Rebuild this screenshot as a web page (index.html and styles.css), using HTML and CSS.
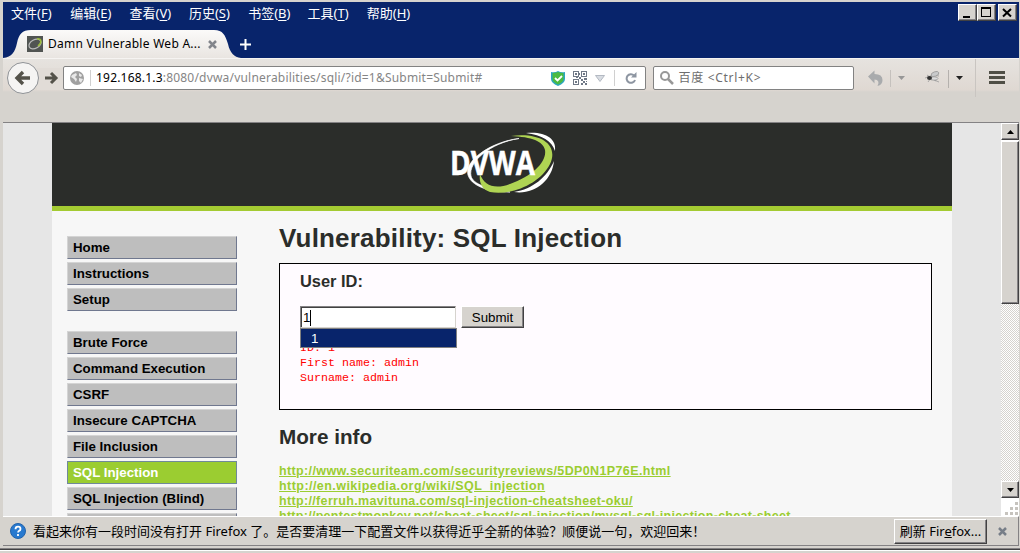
FILE: index.html
```html
<!DOCTYPE html>
<html lang="zh-CN">
<head>
<meta charset="utf-8">
<title>Damn Vulnerable Web App</title>
<link rel="stylesheet" href="styles.css">
</head>
<body>
<div class="window">
  <header class="titlebar">
    <div class="menu-row">
      <nav class="menubar">
        <span>文件(<u>F</u>)</span><span>编辑(<u>E</u>)</span><span>查看(<u>V</u>)</span><span>历史(<u>S</u>)</span><span>书签(<u>B</u>)</span><span>工具(<u>T</u>)</span><span>帮助(<u>H</u>)</span>
      </nav>
      <div class="controls">
        <span class="bevel control"><svg width="16" height="14"><path d="M4 11h7v2H4z"/></svg></span>
        <span class="bevel control"><svg width="16" height="14"><path d="M3 2h10v10H3zM4 4v7h8V4z" fill-rule="evenodd"/></svg></span>
        <span class="bevel control close"><svg width="16" height="14"><path d="M4 4l8 7.500M12 4l-8 7.500" stroke="#000" stroke-width="2"/></svg></span>
      </div>
    </div>
    <div class="tab-row">
      <div class="tab">
        <svg class="tab-shape" width="238" height="28" viewBox="0 0 238 28">
          <defs><linearGradient id="tabfill" x2="0" y2="1"><stop offset="0" stop-color="#fbfaf9"/><stop offset="1" stop-color="#e9e5e1"/></linearGradient></defs>
          <path d="M0 28C9 27 12 22 14 13C16 4 19 0 28 0H211C220 0 222 5 225 14C227 23 231 27 238 28Z" fill="url(#tabfill)"/>
        </svg>
        <div class="tab-label">
          <svg width="16" height="16"><path fill="#515452" d="M0 0h16v16H0z"/><ellipse cx="8" cy="8" rx="6.500" ry="4.200" transform="rotate(-28 8 8)" fill="none" stroke="#bbb" stroke-width="1.300"/><path d="M10 3c5-1 5 4 1 7" fill="none" stroke="#9bbb3a" stroke-width="1.500"/></svg>
          <span class="tab-title">Damn Vulnerable Web A...</span>
          <svg class="tab-close" width="9" height="9"><path d="M1 1l7 7M8 1l-7 7" stroke="#82858b" stroke-width="2.500"/></svg>
        </div>
      </div>
      <svg class="new-tab" width="11" height="11"><path d="M5.500 0v11M0 5.500h11" stroke="#fff" stroke-width="2"/></svg>
    </div>
  </header>

  <div class="toolbar">
    <svg class="back" width="64" height="34" viewBox="0 0 64 34">
      <path d="M31 7h28v22H31z" fill="#e1dcd7"/>
      <circle cx="17" cy="17" r="15.500" fill="#f5f4f3" stroke="#8f9296"/>
      <path d="M24 17H12M17 11l-6 6 6 6" fill="none" stroke="#54524a" stroke-width="3.400"/>
      <path d="M39 17h10M45 12l5 5-5 5" fill="none" stroke="#54524a" stroke-width="3"/>
    </svg>
    <div class="urlbar">
      <svg class="globe" width="14" height="14"><circle cx="7" cy="7" r="7" fill="#a0a0a0"/><path d="M2 4l4-2 1 2-2 2 2 2-1 3-2-3-3-2zM9 2l3 2-1 2-2-1zM9 7l4 1-2 4-2-2z" fill="#e8e8e8"/></svg>
      <span class="sep"></span>
      <span class="url"><b>192.168.1.3</b>:8080/dvwa/vulnerabilities/sqli/?id=1&amp;Submit=Submit#</span>
      <svg class="shield" width="14" height="15"><path d="M0 1q4 1 7-1q3 2 7 1v7q0 4-7 7q-7-3-7-7z" fill="#2ba6c2"/><path d="M1.500 2q3 0 5.500-1q2.500 1 5.500 1v6q0 3-5.500 5.500q-5.500-2.500-5.500-5.500z" fill="#4bbb42"/><path d="M4 7l2.500 2.500L11 5" fill="none" stroke="#fff" stroke-width="1.800"/></svg>
      <svg class="qr" width="14" height="14" fill="#6f7886"><path fill-rule="evenodd" d="M0 0h6v6H0zM1 1v4h4V1zM8 0h6v6H8zM9 1v4h4V1zM0 8h6v6H0zM1 9v4h4V9z"/><path d="M2 2h2v2H2zM10 2h2v2h-2zM2 10h2v2H2zM6 6h2v2H6zM8 8h2v2H8zM11 7h3v2h-3zM10 10h2v2h-2zM12 12h2v2h-2zM8 12h2v2H8zM6 2h1v2H6zM13 10h1v1h-1zM3 6h2v1H3z"/></svg>
      <svg class="drop" width="10" height="7"><path d="M.5.5h9L5 6.500z" fill="#d8dce2" stroke="#b3b9c2"/></svg>
      <span class="sep"></span>
      <svg class="reload" width="12" height="12"><path d="M9 3.500A4.300 4.300 0 1 0 10 8" fill="none" stroke="#8d95a1" stroke-width="2"/><path d="M11.500 0v5.500H6z" fill="#8d95a1"/></svg>
    </div>
    <div class="search">
      <svg width="14" height="14"><circle cx="5" cy="5" r="4" fill="none" stroke="#989898" stroke-width="2"/><path d="M8 8l5 5" stroke="#989898" stroke-width="2.500"/></svg>
      <span>百度 &lt;Ctrl+K&gt;</span>
    </div>
    <div class="tools">
      <svg width="156" height="38" viewBox="0 0 156 38">
        <path d="M5 17.500l6.500-6v3.500q8 0 8 6q0 5-5 6q3-6-3-6.500v4z" fill="#a9abad"/>
        <path d="M27.500 11v17" stroke="#c5c1bd"/><path d="M35 17h7l-3.500 4z" fill="#979797"/>
        <g stroke="#999" stroke-width=".8" fill="none"><path d="M62 19l8-3 6 1M64 16l9 6M65 23l5-7 4-3M71 21l5 2"/><ellipse cx="72" cy="15" rx="4" ry="2.200" fill="#c9cacb" transform="rotate(-20 72 15)"/><ellipse cx="71" cy="19.500" rx="4" ry="1.700" fill="#ddd"/></g><ellipse cx="66.500" cy="19" rx="2.500" ry="2" fill="#333"/>
        <path d="M85.500 11v18" stroke="#b5b1ad"/><path d="M93 17h7l-3.500 4z" fill="#222"/>
        <path d="M112.500 0v38" stroke="#c9c5c1"/>
        <path d="M126 12h16v3h-16zM126 17h16v3h-16zM126 22h16v3h-16z" fill="#504f46"/>
      </svg>
    </div>
  </div>

  <div class="viewport">
    <div class="page">
      <div class="container">
        <div class="banner">
          <svg width="112" height="66" viewBox="0 0 112 66">
            <path d="M71 7.500C42 12 20 31 23 45C25 53 39 58 62 61C38 61 23 54 20 44C16 30 42 11 71 7.500Z" fill="#fff" stroke="#fff" stroke-width=".7"/>
            <path d="M78 2C96 0 109 7 107 20C104 10 94 4 78 2ZM106 30C104 50 86 64 66 61C85 58 99 46 106 30Z" fill="#fff"/>
            <path d="M63 5C93 1 111 14 102 33C92 53 63 65 42 61C32 58 31 48 32 43C36 54 46 59 62 53C84 45 99 31 97 19C95 10 84 6 63 5Z" fill="#afd453"/>
            <text x="2" y="44" class="logo-text" textLength="85" lengthAdjust="spacingAndGlyphs">DVWA</text>
          </svg>
        </div>
        <div class="body">
          <ul class="side">
            <li>Home</li><li>Instructions</li><li>Setup</li>
            <li class="group">Brute Force</li><li>Command Execution</li><li>CSRF</li><li>Insecure CAPTCHA</li><li>File Inclusion</li><li class="selected">SQL Injection</li><li>SQL Injection (Blind)</li><li></li>
          </ul>
          <main class="main">
            <h1>Vulnerability: SQL Injection</h1>
            <section class="panel">
              <h3>User ID:</h3>
              <div class="form">
                <div class="field">1<i class="caret"></i><div class="suggest">1</div></div>
                <span class="submit">Submit</span>
              </div>
              <pre class="result">ID: 1
First name: admin
Surname: admin</pre>
            </section>
            <h2>More info</h2>
            <div class="links">
              <a class="l1">http://www.securiteam.com/securityreviews/5DP0N1P76E.html</a>
              <a class="l2">http://en.wikipedia.org/wiki/SQL_injection</a>
              <a class="l3">http://ferruh.mavituna.com/sql-injection-cheatsheet-oku/</a>
              <a class="l4">http://pentestmonkey.net/cheat-sheet/sql-injection/mysql-sql-injection-cheat-sheet</a>
            </div>
          </main>
        </div>
      </div>
    </div>
    <div class="scrollbar">
      <span class="bevel arrow"><svg width="7" height="4"><path d="M0 4h7L3.500 0z"/></svg></span>
      <span class="bevel thumb"></span>
      <span class="track"></span>
      <span class="bevel arrow"><svg width="7" height="4"><path d="M0 0h7L3.500 4z"/></svg></span>
      <span class="grip"><svg width="14" height="14" fill="#c6c3be"><path d="M10 0h3v3h-3zM5 5h3v3H5zM10 5h3v3h-3zM0 10h3v3H0zM5 10h3v3H5zM10 10h3v3h-3z"/></svg></span>
    </div>
  </div>

  <footer class="notice">
    <svg class="help" width="16" height="16"><circle cx="8" cy="8" r="7.500" fill="#2879cf" stroke="#2363ab"/><path d="M5.500 6.200Q5.500 3.700 8 3.700t2.500 2.200q0 1.300-1.400 1.900q-1 .5-1 1.700M8 11v2" fill="none" stroke="#fff" stroke-width="1.800"/></svg>
    <span class="notice-text">看起来你有一段时间没有打开 <em>Firefox</em> 了。是否要清理一下配置文件以获得近乎全新的体验？顺便说一句，欢迎回来！</span>
    <span class="bevel refresh">刷新 Fir<u>e</u>fox...</span>
    <svg class="dismiss" width="9" height="9"><path d="M1 1l7 7M8 1l-7 7" stroke="#777e88" stroke-width="2.500"/></svg>
  </footer>
  <div class="bottom-edge"></div>
</div>
</body>
</html>
```
FILE: styles.css
```css
* { box-sizing: border-box; }
body { margin: 0; width: 1020px; height: 553px; overflow: hidden; background: #d6d3ce; font: 13px/16px "Noto Sans", "Noto Sans CJK SC", sans-serif; color: #000; }
svg { display: block; flex: none; }
.window { padding: 2px 1px 0 3px; height: 553px; display: flex; flex-direction: column; }
.titlebar { height: 56px; background: #08246b; flex: none; }
.menu-row { height: 28px; display: flex; justify-content: space-between; }
.menubar { display: flex; padding: 2px 0 0 8px; color: #fff; line-height: 18px; }
.menubar span { width: 59.3px; white-space: nowrap; }
.menubar u { text-underline-offset: 2px; }
.controls { display: flex; padding: 2px 2px 0 0; }
.bevel { background: #d6d3ce; border: 1px solid; border-color: #fff #424142 #424142 #fff; box-shadow: inset -1px -1px #848284; }
.control { width: 19px; height: 17px; }
.close { margin-left: 2px; }
.tab-row { display: flex; height: 28px; }
.tab { display: grid; width: 238px; }
.tab-shape, .tab-label { grid-area: 1 / 1; }
.tab-label { display: flex; align-items: center; padding-left: 24px; height: 28px; font-size: 12px; }
.tab-title { width: 158px; margin-left: 5px; white-space: nowrap; letter-spacing: .27px; }
.tab-close { margin-left: 2px; }
.new-tab { margin: 9px 0 0 -1px; }

.toolbar { height: 65px; flex: none; display: flex; align-items: flex-start; border-top: 1px solid #f6f4f2; border-bottom: 1px solid #848284; background: linear-gradient(#e6e3df, #dfd8d2 31px, #d6d3ce 33px); }
.back { margin: 2px -4px 0 3px; }
.urlbar { width: 584px; height: 24px; margin: 7px 0 0 -3px; border: 1px solid #828282; border-radius: 2px; background: #fff; display: flex; align-items: center; font-size: 12px; color: #858585; }
.globe { margin-left: 6px; }
.sep { width: 1px; height: 16px; background: #d0d0d0; margin: 0 5px 0 6px; }
.url { width: 455px; white-space: nowrap; letter-spacing: .2px; }
.url b { color: #000; font-weight: 400; }
.qr { margin-left: 8px; }
.drop { margin-left: 8px; }
.urlbar .drop + .sep { margin: 0 10px 0 9px; }
.search { width: 202px; height: 24px; margin: 7px 0 0 7px; padding-left: 6px; gap: 5px; border: 1px solid #828282; border-radius: 2px; background: #fff; display: flex; align-items: center; font-size: 12px; letter-spacing: .7px; color: #6e6e6e; }
.tools { margin: 0 0 0 9px; }

.viewport { height: 393px; flex: none; display: flex; background: #e6e6e6; }
.page { width: 998px; height: 393px; overflow: hidden; padding-left: 49px; }
.container { width: 900px; height: 393px; background: #f7f7f7; font-family: "Liberation Sans", Arial, sans-serif; }
.banner { height: 88px; background: #2b2d2a; border-bottom: 5px solid #a4cb32; padding: 8px 0 0 396px; }
.logo-text { font: 700 34px "Open Sans", sans-serif; fill: #fff; stroke: #fff; stroke-width: .5px; }
.body { display: flex; padding-left: 15px; }
.side { list-style: none; margin: 25px 0 0; padding: 0; width: 170px; flex: none; font: 700 13.3px/22px "Liberation Sans", Arial, sans-serif; }
.side li { height: 23px; margin-bottom: 3px; padding-left: 5px; background: #bebebe; border: 1px solid; border-color: #d4d4d4 #70788f #70788f #d4d4d4; }
.side .group { margin-top: 20px; }
.side .selected { background: #9bcd31; color: #fff; border-color: #70899a; }
.main { width: 653px; margin-left: 42px; color: #2b2d2a; }
h1 { font-size: 26px; line-height: 30px; margin: 12px 0 10px; white-space: nowrap; letter-spacing: .19px; }
.panel { height: 147px; border: 1px solid #000; background: #fffbff; padding: 7px 20px; }
h3 { margin: 0 0 14px; font-size: 16.4px; line-height: 21px; font-weight: 700; }
.form { display: flex; gap: 5px; height: 22px; color: #000; font-size: 13.3px; line-height: 19px; }
.field { position: relative; width: 156px; height: 22px; background: #fff; border: 1px solid; border-color: #848284 #d6d3ce #d6d3ce #848284; box-shadow: inset 1px 1px #424142; padding: 1px 0 0 2px; display: flex; }
.caret { width: 1px; height: 16px; margin-top: 2px; background: #000; }
.suggest { position: absolute; left: -1px; top: 21px; width: 157px; height: 20px; border: 1px solid #808080; background: #08246b; color: #fff; padding-left: 10px; line-height: 20px; }
.submit { width: 63px; background: #d6d3ce; border: 1px solid; border-color: #fff #424142 #424142 #fff; box-shadow: inset -1px -1px #848284; text-align: center; line-height: 21px; }
.result { margin: 13px 0 0; font: 11.67px/15px "Liberation Mono", monospace; color: #f00; }
h2 { margin: 15px 0 15px; font-size: 20.7px; line-height: 24px; }
.links { display: flex; flex-direction: column; align-items: flex-start; font: 700 12.5px/15px "Liberation Sans", Arial, sans-serif; color: #9bcd31; }
.links a { text-decoration: underline; white-space: nowrap; }
.l1 { letter-spacing: .37px; }
.l2 { letter-spacing: .45px; }
.l3 { letter-spacing: .34px; }
.l4 { letter-spacing: .28px; }

.scrollbar { width: 18px; display: flex; flex-direction: column; background: #fff; }
.arrow { height: 17px; display: flex; align-items: center; justify-content: center; flex: none; }
.thumb { height: 163px; margin-top: 1px; flex: none; }
.track { flex: 1; background: repeating-conic-gradient(#d6d3ce 0 25%, #fff 0 50%) 0 0 / 2px 2px; }
.grip { height: 18px; padding: 4px 0 0 4px; flex: none; }

.notice { height: 30px; flex: none; display: flex; align-items: center; border-top: 1px solid #fff; border-bottom: 1px solid #848284; border-right: 1px solid #848284; padding-left: 7px; }
.notice-text { width: 861px; margin-left: 7px; white-space: nowrap; }
.notice em { font-style: normal; }
.refresh { width: 93px; height: 25px; line-height: 22px; text-align: center; white-space: nowrap; }
.dismiss { margin-left: 11px; }
.bottom-edge { height: 7px; background: linear-gradient(#d6d3ce 2px, #848284 2px 3px, #424142 3px 4px, #fff 4px 5px, #d6d3ce 5px); margin: 0 -1px 0 -3px; }
```
